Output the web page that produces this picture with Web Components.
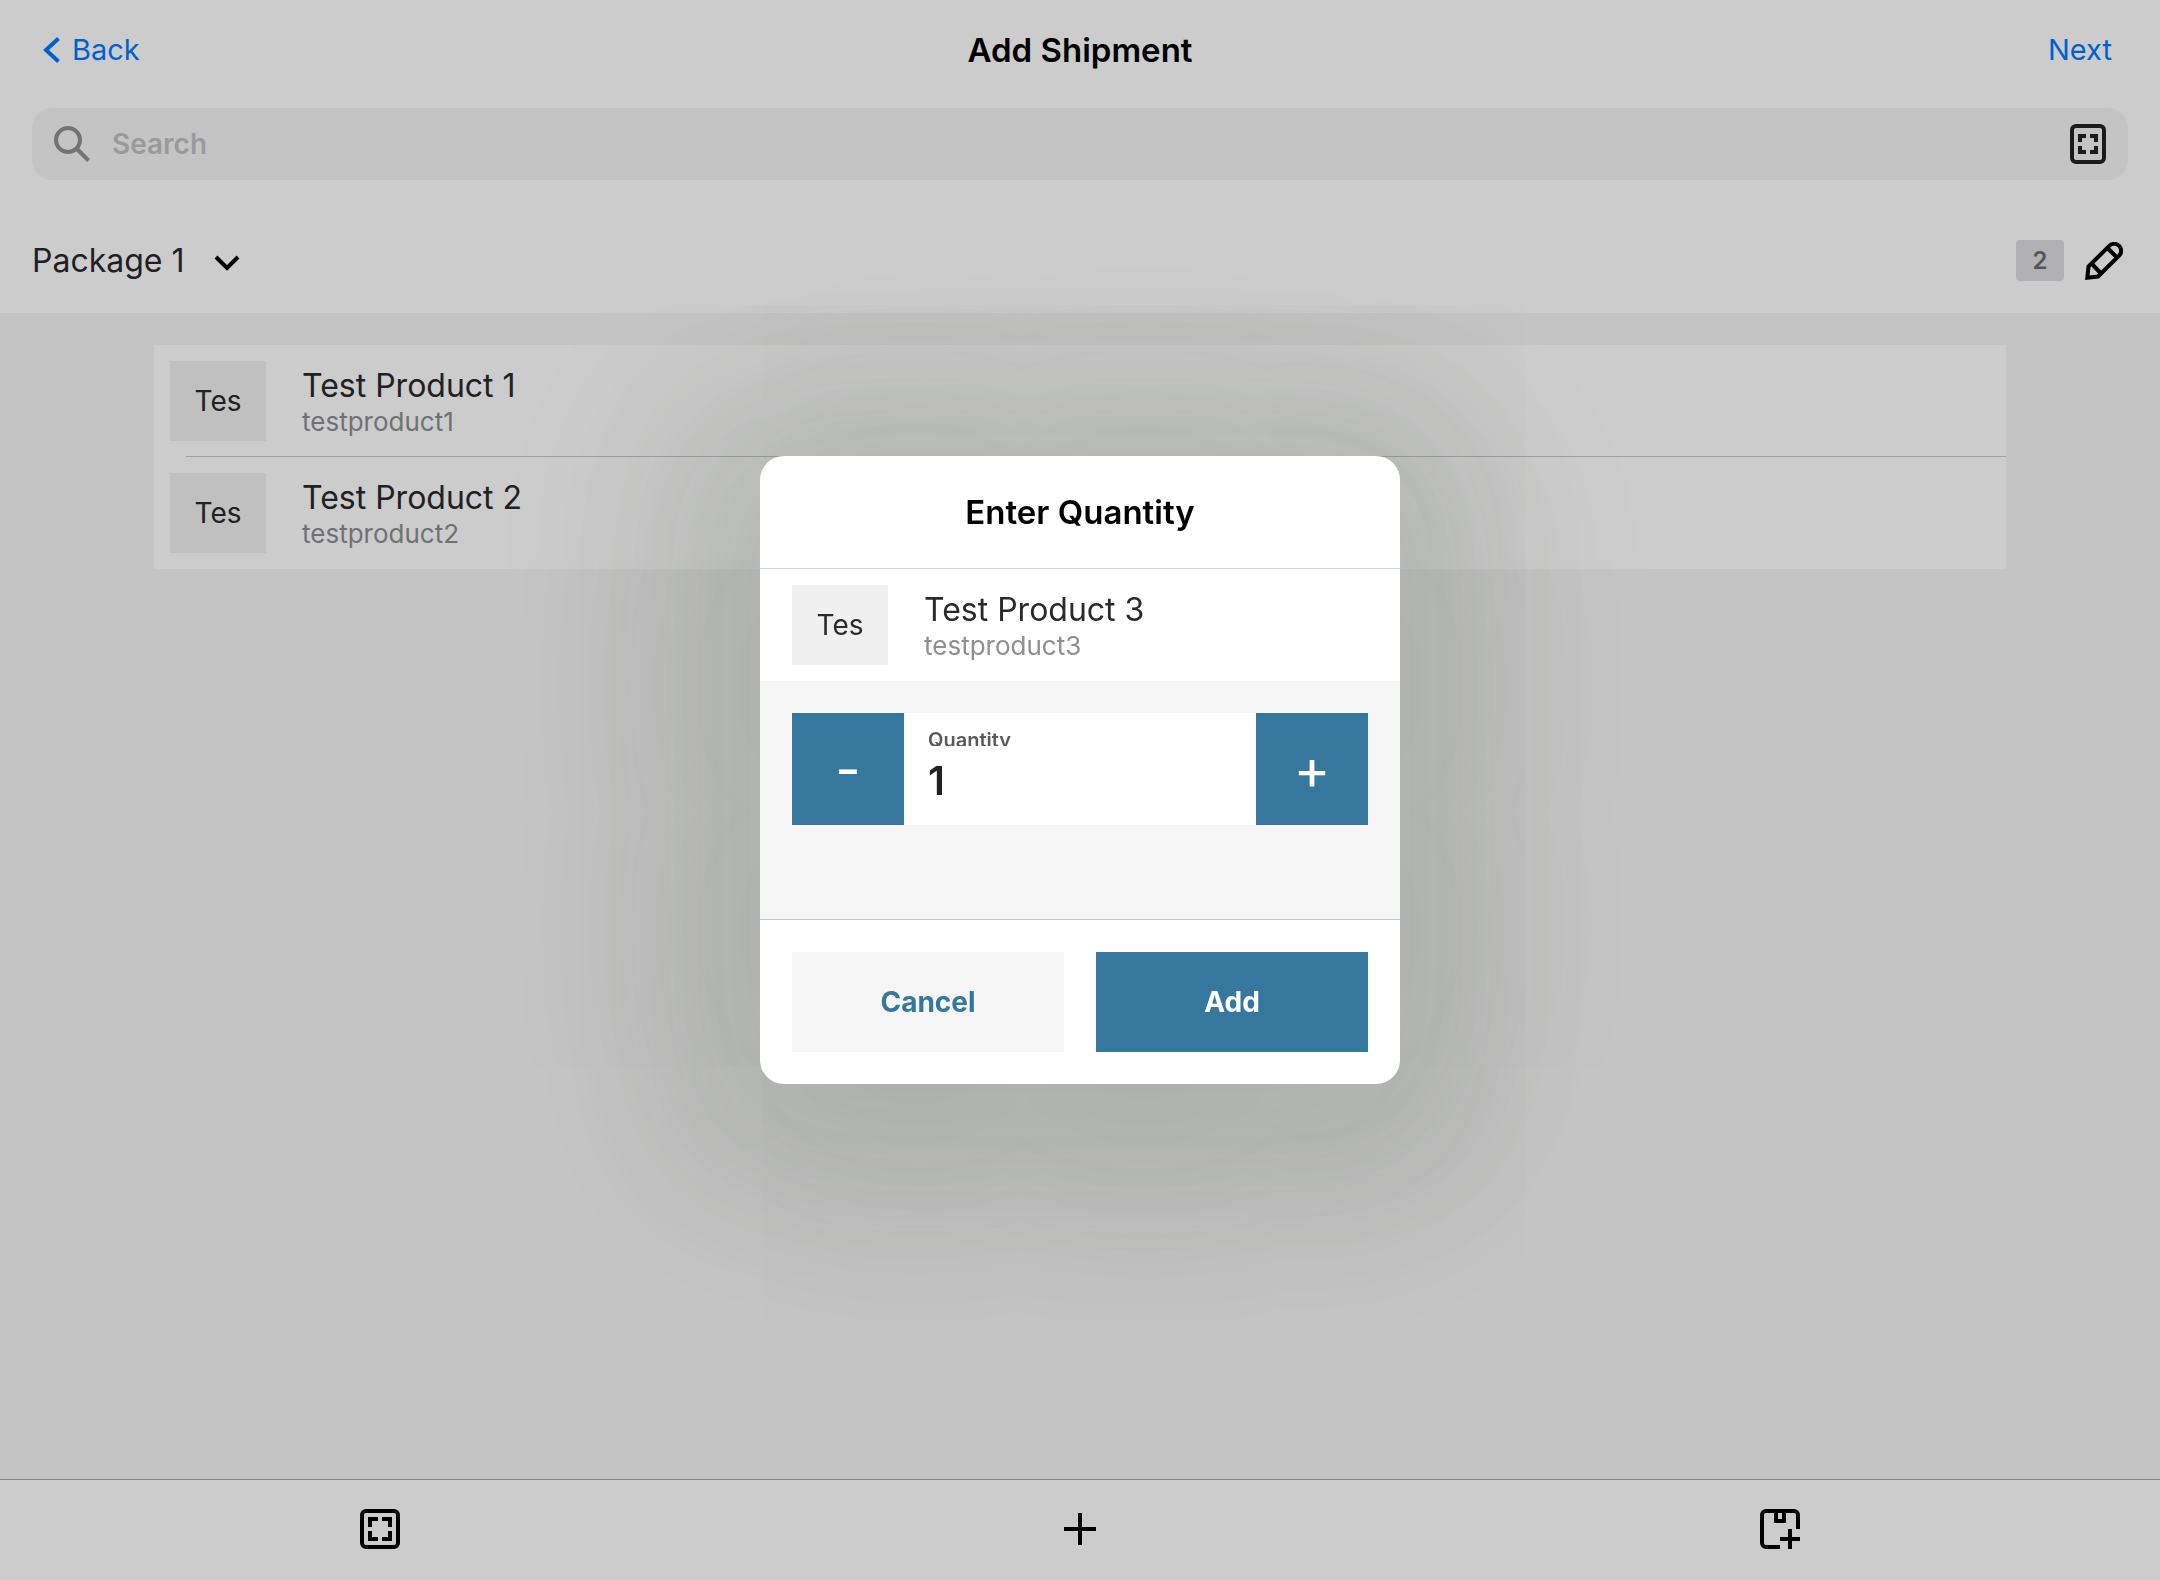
<!DOCTYPE html>
<html lang="en">
<head>
<meta charset="utf-8">
<meta name="viewport" content="width=device-width, initial-scale=1">
<title>Add Shipment</title>
<style>
  html { height: 100%; }
  body {
    margin: 0;
    min-height: 100%;
    font-family: Inter, "Liberation Sans", sans-serif;
    color: #2a2a2c;
    --accent: #36779e;
    --link: #007aff;
    --surface: #ffffff;
    --ground: #f6f6f6;
    --thumb: #f0f0f0;
    --muted: #8e8e93;
    --fs-heading: 33px;
    --fs-title: 32px;
    --fs-body: 28px;
    --fs-small: 26px;
  }
</style>
</head>
<body>
<shipment-page></shipment-page>

<script>
const define = (name, markup, setup) => {
  const template = document.createElement('template');
  template.innerHTML = '<style>*{box-sizing:border-box}button,input{font:inherit;color:inherit;border:0;padding:0;margin:0;background:none;border-radius:0}svg{display:block;flex:none}</style>' + markup;
  customElements.define(name, class extends HTMLElement {
    constructor() {
      super();
      this.attachShadow({ mode: 'open' }).append(template.content.cloneNode(true));
    }
    connectedCallback() { if (setup) setup(this, this.shadowRoot); }
  });
};

const ICONS = {
  back: [17, 26, '<path d="M15.500 1.500 3 13l12.500 11.500" fill="none" stroke="currentColor" stroke-width="4"/>'],
  search: [36, 36, '<g fill="none" stroke="currentColor" stroke-width="4"><circle cx="14" cy="14" r="12"/><path d="M22.500 22.500 34.500 34.500"/></g>'],
  scanfield: [36, 40, '<rect x="2" y="2" width="32" height="36" rx="4" fill="none" stroke="currentColor" stroke-width="4"/><path d="M8 10h8v4h-4v4H8zM20 10h8v8h-4v-4h-4zM8 22h4v4h4v4H8zM24 22h4v8h-8v-4h4z" fill="currentColor"/>'],
  scan: [40, 40, '<rect x="2" y="2" width="36" height="36" rx="4" fill="none" stroke="currentColor" stroke-width="4"/><path d="M8 8h10v4h-6v6H8zM22 8h10v10h-4v-6h-6zM8 22h4v6h6v4H8zM28 22h4v10H22v-4h6z" fill="currentColor"/>'],
  down: [26, 16, '<path d="M2 2 13 13 24 2" fill="none" stroke="currentColor" stroke-width="4"/>'],
  pencil: [38, 38, '<g fill="none" stroke="currentColor" stroke-width="4"><path d="M2.300 35.700 3.500 24.500 24.300 3.900a6.800 6.800 0 0 1 9.800 9.800L13 34.500Z"/><path d="M6.500 21.500 16 31.500M22.500 6 32 15.500"/></g>'],
  plus: [40, 40, '<path d="M20 4v32M4 20h32" stroke="currentColor" stroke-width="4"/>'],
  box: [40, 40, '<g fill="none" stroke="currentColor" stroke-width="4"><path d="M38 20V6a4 4 0 0 0-4-4H6a4 4 0 0 0-4 4v28a4 4 0 0 0 4 4h14"/><path d="M16 2v10h8V2M30 20v20M20 30h20"/></g>']
};

define('ui-icon', '<style>:host{display:inline-flex;flex:none}</style><span></span>', (el, root) => {
  const [w, h, body] = ICONS[el.getAttribute('name')];
  root.querySelector('span').innerHTML = `<svg width="${w}" height="${h}" viewBox="0 0 ${w} ${h}" aria-hidden="true">${body}</svg>`;
});

define('nav-bar', `
<style>
  :host { display: grid; grid-template-columns: 1fr auto 1fr; align-items: center; height: 100px; }
  a { display: inline-flex; align-items: center; gap: 12px; padding: 0 48px 0 43px; color: var(--link); font-size: 29px; line-height: 40px; text-decoration: none; }
  a:last-child { justify-self: end; }
  h1 { margin: 0; color: #000; font-size: var(--fs-heading); font-weight: 600; line-height: 40px; }
</style>
<a href="#back"><ui-icon name="back"></ui-icon>Back</a>
<h1><slot></slot></h1>
<a href="#next">Next</a>`);

define('search-field', `
<style>
  :host { display: flex; align-items: center; gap: 22px; height: 72px; margin: 8px 32px 0; padding: 0 22px; border-radius: 20px; background: var(--ground); }
  label { display: flex; color: #8e9092; }
  input { flex: 1; min-width: 0; outline: 0; font-size: var(--fs-body); font-weight: 600; line-height: 40px; }
  input::placeholder { color: #c1c1c4; opacity: 1; }
  button { display: flex; color: #222; }
</style>
<label for="q" aria-label="Search"><ui-icon name="search"></ui-icon></label>
<input id="q" type="text" placeholder="Search">
<button aria-label="Scan barcode"><ui-icon name="scanfield"></ui-icon></button>`);

define('package-bar', `
<style>
  :host { display: flex; align-items: center; justify-content: space-between; margin-top: 28px; height: 105px; padding: 0 37px 0 32px; }
  button { display: flex; align-items: center; gap: 29px; }
  .pick { font-size: var(--fs-title); line-height: 40px; }
  .pick ui-icon { margin-top: 4px; }
  .pick ui-icon, .edit { color: #000; }
  .side { display: flex; align-items: center; gap: 21px; }
  .count { width: 48px; border-radius: 4px; background: #dedde3; color: #6b6b70; font-size: 24px; font-weight: 600; line-height: 41px; text-align: center; }
</style>
<button class="pick"><slot></slot><ui-icon name="down"></ui-icon></button>
<div class="side"><span class="count">2</span><button class="edit" aria-label="Edit package"><ui-icon name="pencil"></ui-icon></button></div>`);

define('product-row', `
<style>
  :host { display: flex; align-items: center; gap: 36px; height: 112px; padding: 0 16px; background: var(--surface); }
  .thumb { flex: none; width: 96px; background: var(--thumb); font-size: var(--fs-body); line-height: 80px; text-align: center; }
  .text { padding-top: 2px; }
  .name { font-size: var(--fs-title); line-height: 40px; }
  .sku { color: var(--muted); font-size: var(--fs-small); line-height: 32px; }
</style>
<div class="thumb">Tes</div>
<div class="text"><div class="name"><slot></slot></div><div class="sku"><slot name="sku"></slot></div></div>`);

define('product-list', `
<style>
  :host { display: block; flex: 1; padding: 32px 154px; background: var(--ground); }
  ::slotted(product-row:not(:last-child)) {
    background: linear-gradient(#c9c9cc, #c9c9cc) 32px 100% / 100% 1px no-repeat var(--surface) !important;
  }
</style>
<slot></slot>`);

define('tab-bar', `
<style>
  :host { display: flex; height: 101px; padding: 0 30px 2px; border-top: 1px solid #a9a9ab; background: var(--surface); box-sizing: border-box; }
  button { flex: 1; display: flex; align-items: center; justify-content: center; color: #000; }
</style>
<button aria-label="Scan"><ui-icon name="scan"></ui-icon></button>
<button aria-label="Add item"><ui-icon name="plus"></ui-icon></button>
<button aria-label="Add package"><ui-icon name="box"></ui-icon></button>`);

define('quantity-stepper', `
<style>
  :host { display: flex; height: 112px; background: var(--surface); }
  button { flex: none; width: 112px; background: var(--accent); color: #fff; font-size: 56px; line-height: 112px; }
  .field { flex: 1; min-width: 0; display: flex; flex-direction: column; padding: 15px 24px 0; }
  label { height: 18px; overflow: hidden; color: #5a5a5c; font-size: 20px; font-weight: 600; line-height: 24px; }
  input { width: 100%; outline: 0; color: #222; font-size: 40px; font-weight: 600; height: 56px; margin-top: 6px; }
</style>
<button aria-label="Decrease">-</button>
<div class="field"><label for="n">Quantity</label><input id="n" type="text" inputmode="numeric" value="1"></div>
<button aria-label="Increase">+</button>`, (el, root) => {
  const input = root.querySelector('input');
  const [less, more] = root.querySelectorAll('button');
  less.onclick = () => { input.value = Math.max(0, Number(input.value) - 1); };
  more.onclick = () => { input.value = Number(input.value) + 1; };
});

define('quantity-dialog', `
<style>
  :host { position: fixed; inset: 0; display: flex; align-items: center; justify-content: center; padding-bottom: 40px; background: rgba(0,0,0,.2); }
  section { width: 640px; max-width: 100%; border-radius: 24px; background: var(--surface);
    box-shadow: 0 16px 160px 70px rgba(60,90,45,.1), 0 20px 400px 80px rgba(50,50,48,.12); }
  h2 { margin: 0; border-bottom: 1px solid #d2d2d6; color: #000; font-size: var(--fs-heading); font-weight: 600; line-height: 112px; text-align: center; }
  ::slotted(product-row) { padding: 0 32px !important; }
  .body { padding: 32px 32px 94px; background: var(--ground); }
  footer { display: flex; gap: 32px; padding: 32px; border-top: 1px solid #c8c8cb; }
  button { flex: 1; height: 100px; font-size: var(--fs-body); font-weight: 700; background: var(--ground); color: var(--accent); }
  .primary { background: var(--accent); color: #fff; }
</style>
<section role="dialog" aria-modal="true" aria-labelledby="t">
  <h2 id="t">Enter Quantity</h2>
  <slot></slot>
  <div class="body"><quantity-stepper></quantity-stepper></div>
  <footer><button>Cancel</button><button class="primary">Add</button></footer>
</section>`);

define('shipment-page', `
<style>
  :host { display: flex; flex-direction: column; min-height: 100vh; background: var(--surface); }
</style>
<nav-bar>Add Shipment</nav-bar>
<search-field></search-field>
<package-bar>Package 1</package-bar>
<product-list>
  <product-row>Test Product 1<span slot="sku">testproduct1</span></product-row>
  <product-row>Test Product 2<span slot="sku">testproduct2</span></product-row>
</product-list>
<tab-bar></tab-bar>
<quantity-dialog>
  <product-row>Test Product 3<span slot="sku">testproduct3</span></product-row>
</quantity-dialog>`);
</script>
</body>
</html>
